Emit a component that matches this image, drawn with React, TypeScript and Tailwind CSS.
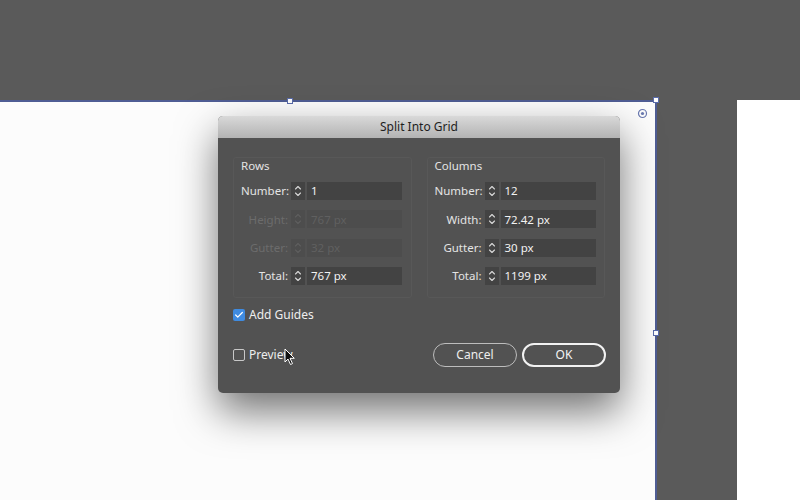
import { Check } from "lucide-react";

const font = { fontFamily: '"Noto Sans", "Open Sans", sans-serif' };

type Field = { label: string; value: string; disabled?: boolean };

const rows: Field[] = [
  { label: "Number:", value: "1" },
  { label: "Height:", value: "767 px", disabled: true },
  { label: "Gutter:", value: "32 px", disabled: true },
  { label: "Total:", value: "767 px" },
];

const columns: Field[] = [
  { label: "Number:", value: "12" },
  { label: "Width:", value: "72.42 px" },
  { label: "Gutter:", value: "30 px" },
  { label: "Total:", value: "1199 px" },
];

function Stepper({ disabled }: { disabled?: boolean }) {
  return (
    <div
      className={
        "flex h-full w-[14px] items-center justify-center " +
        (disabled ? "bg-[#4d4d4d]" : "bg-[#434343]")
      }
    >
      <svg width="8" height="14" viewBox="0 0 8 14" fill="none">
        <path
          d="M1.5 5 L4 2.5 L6.5 5 M1.5 9 L4 11.5 L6.5 9"
          stroke={disabled ? "#5e5e5e" : "#d8d8d8"}
          strokeWidth="1.1"
          strokeLinecap="round"
          strokeLinejoin="round"
        />
      </svg>
    </div>
  );
}

function FieldRow({ f }: { f: Field }) {
  return (
    <div className="flex h-[18px] items-center">
      <span
        className={
          "w-[47px] text-right text-[11.5px] " +
          (f.disabled ? "text-[#6c6c6c]" : "text-[#e4e4e4]")
        }
      >
        {f.label}
      </span>
      <div className="ml-[3px] flex h-full items-center gap-[2px]">
        <Stepper disabled={f.disabled} />
        <div
          className={
            "flex h-full w-[95px] items-center px-[4px] text-[11.5px] " +
            (f.disabled ? "bg-[#4d4d4d] text-[#606060]" : "bg-[#434343] text-[#f2f2f2]")
          }
        >
          {f.value}
        </div>
      </div>
    </div>
  );
}

function Group({ title, fields }: { title: string; fields: Field[] }) {
  return (
    <div className="flex h-[141px] w-[179px] flex-col rounded-[3px] border border-[#585858] px-[7px] pt-[1px]">
      <span className="text-[11.5px] leading-[14px] text-[#e4e4e4]">{title}</span>
      <div className="mt-[9px] flex flex-col gap-[10.3px]">
        {fields.map((f) => (
          <FieldRow key={f.label} f={f} />
        ))}
      </div>
    </div>
  );
}

function Handle({ className }: { className: string }) {
  return (
    <div
      className={
        "absolute h-[6px] w-[6px] border border-[#5a6cab] bg-white " + className
      }
    />
  );
}

function Cursor() {
  return (
    <svg
      className="absolute left-[284px] top-[348px]"
      width="12"
      height="18"
      viewBox="0 0 12 18"
    >
      <path
        d="M1 1 L1 14 L4 11 L6.5 16.5 L8.5 15.6 L6 10.3 L10.3 10.3 Z"
        fill="#111"
        stroke="#fff"
        strokeWidth="1"
        strokeLinejoin="round"
      />
    </svg>
  );
}

export default function App() {
  return (
    <div className="relative h-[500px] w-[800px] overflow-hidden bg-[#5a5a5a]" style={font}>
      {/* artboards */}
      <div className="absolute left-0 top-[100px] h-[400px] w-[657px] border-r-[2px] border-t-[2px] border-[#4f5d94] bg-[#fcfcfc]" />
      <div className="absolute left-[737px] top-[100px] h-[400px] w-[63px] bg-white" />

      <Handle className="left-[287px] top-[98px]" />
      <Handle className="left-[653px] top-[97px]" />
      <Handle className="left-[653px] top-[330px]" />

      <svg className="absolute left-[637px] top-[108px]" width="11" height="11" viewBox="0 0 11 11">
        <circle cx="5.5" cy="5.5" r="4" fill="none" stroke="#6a79b0" strokeWidth="1.2" />
        <circle cx="5.5" cy="5.5" r="1.6" fill="#6a79b0" />
      </svg>

      {/* dialog */}
      <div className="absolute left-[218px] top-[116px] flex h-[277px] w-[402px] flex-col overflow-hidden rounded-[5px] bg-[#525252] shadow-[0_18px_40px_rgba(0,0,0,0.55)]">
        <div className="flex h-[22px] items-center justify-center bg-gradient-to-b from-[#d9d9d9] to-[#b3b3b3] text-[12px] text-[#1e1e1e]">
          Split Into Grid
        </div>

        <div className="flex flex-1 flex-col px-[15px] pt-[19px]">
          <div className="flex gap-[15px]">
            <Group title="Rows" fields={rows} />
            <Group title="Columns" fields={columns} />
          </div>

          <label className="mt-[9px] flex h-[16px] items-center gap-[4px]">
            <span className="flex h-[12px] w-[12px] items-center justify-center rounded-[2px] bg-[#3f8be0]">
              <Check className="size-[10px] text-white" strokeWidth={3} />
            </span>
            <span className="text-[12px] leading-[16px] text-[#eeeeee]">Add Guides</span>
          </label>

          <div className="mt-[20px] flex items-center justify-between">
            <label className="flex items-center gap-[4px]">
              <span className="h-[12px] w-[12px] rounded-[2px] border border-[#c8c8c8]" />
              <span className="text-[12px] text-[#eeeeee]">Preview</span>
            </label>
            <div className="mr-[-1px] flex gap-[5px]">
              <button className="h-[24px] w-[84px] rounded-full border border-[#bdbdbd] text-[12px] text-[#eeeeee]">
                Cancel
              </button>
              <button className="h-[24px] w-[84px] rounded-full border-2 border-[#f2f2f2] text-[12px] text-[#f5f5f5]">
                OK
              </button>
            </div>
          </div>
        </div>
      </div>

      <Cursor />
    </div>
  );
}
